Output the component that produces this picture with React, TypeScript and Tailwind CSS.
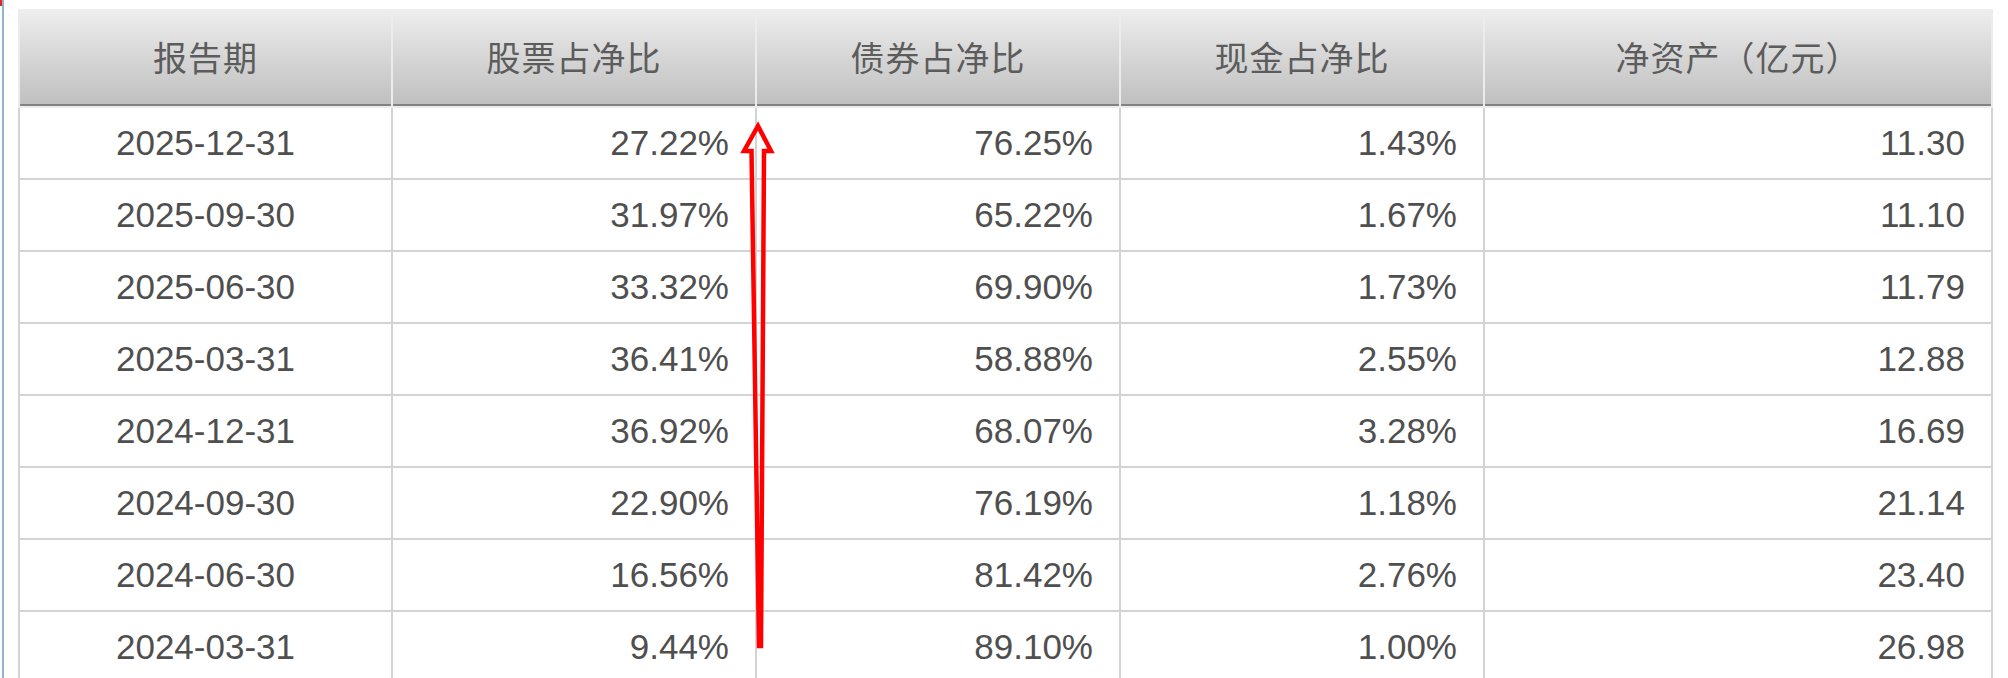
import React from 'react';

interface Row {
  date: string;
  stock: string;
  bond: string;
  cash: string;
  asset: string;
}

const rows: Row[] = [
  { date: '2025-12-31', stock: '27.22%', bond: '76.25%', cash: '1.43%', asset: '11.30' },
  { date: '2025-09-30', stock: '31.97%', bond: '65.22%', cash: '1.67%', asset: '11.10' },
  { date: '2025-06-30', stock: '33.32%', bond: '69.90%', cash: '1.73%', asset: '11.79' },
  { date: '2025-03-31', stock: '36.41%', bond: '58.88%', cash: '2.55%', asset: '12.88' },
  { date: '2024-12-31', stock: '36.92%', bond: '68.07%', cash: '3.28%', asset: '16.69' },
  { date: '2024-09-30', stock: '22.90%', bond: '76.19%', cash: '1.18%', asset: '21.14' },
  { date: '2024-06-30', stock: '16.56%', bond: '81.42%', cash: '2.76%', asset: '23.40' },
  { date: '2024-03-31', stock: '9.44%', bond: '89.10%', cash: '1.00%', asset: '26.98' },
];

const headers = ['报告期', '股票占净比', '债券占净比', '现金占净比', '净资产（亿元）'];

const cols = 'grid grid-cols-[371px_362px_362px_362px_506px] gap-x-[2px] px-[2px]';

export default function App() {
  return (
    <div className="relative flex w-[2008px] h-[678px] overflow-hidden bg-white">
      <div className="w-[2px] flex flex-col">
        <div className="h-[6px] bg-[#e8221e]" />
      </div>
      <div className="w-[2px] bg-[#8db4d4]" />

      <div className="ml-[14px] mt-[9px] w-[1975px]">
        {/* header */}
        <div className={`${cols} bg-[#ececec] pb-[2px]`}>
          {headers.map((h) => (
            <div
              key={h}
              className="h-[97px] flex items-center justify-center bg-gradient-to-b from-[#eeeeee] to-[#c0c0c0] border-b-2 border-[#828282] text-[34px] text-[#5c5c5c] tracking-[1px] font-['SimSun','Noto_Sans_CJK_SC',sans-serif]"
            >
              {h}
            </div>
          ))}
        </div>

        {/* body */}
        <div className={`${cols} gap-y-[2px] pb-[2px] bg-[#d3d3d3] text-[35px] text-[#4f4f4f] font-['Liberation_Sans',Arial,sans-serif]`}>
          {rows.map((r) => (
            <React.Fragment key={r.date}>
              <div className="h-[70px] bg-white flex items-center justify-center">{r.date}</div>
              <div className="h-[70px] bg-white flex items-center justify-end pr-[26px]">{r.stock}</div>
              <div className="h-[70px] bg-white flex items-center justify-end pr-[26px]">{r.bond}</div>
              <div className="h-[70px] bg-white flex items-center justify-end pr-[26px]">{r.cash}</div>
              <div className="h-[70px] bg-white flex items-center justify-end pr-[26px]">{r.asset}</div>
            </React.Fragment>
          ))}
        </div>
      </div>

      {/* hand-drawn red arrow annotation */}
      <svg className="absolute inset-0 pointer-events-none" width="2008" height="678">
        <path
          d="M758 126 L771 151 L764 151 L761 646 L759 646 L751.5 151 L744 151 Z"
          fill="none"
          stroke="#ff0000"
          strokeWidth="4.5"
          strokeLinejoin="miter"
        />
      </svg>
    </div>
  );
}
